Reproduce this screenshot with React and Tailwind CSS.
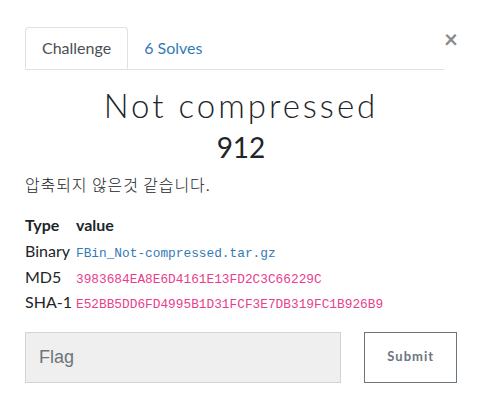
export default function App() {
  const mono = { fontFamily: "'Liberation Mono', monospace" };
  return (
    <div className="w-[482px] h-[411px] bg-white px-[25px] pt-[27px] text-[#212529]" style={{ fontFamily: "Lato, 'Noto Sans CJK KR', sans-serif" }}>
      <div className="flex items-start">
        <div className="flex flex-1 border-b border-[#dee2e6] text-[16px]">
          <div className="-mb-px h-[42px] px-[16px] flex items-center border border-[#dee2e6] border-b-white rounded-t-[4px] bg-white text-[#495057]">Challenge</div>
          <div className="h-[42px] px-[16px] flex items-center text-[#337ab7]">6 Solves</div>
        </div>
        <div className="w-[12px] ml-[1px] flex items-center justify-center text-[24px] leading-none font-bold text-[#8a8a8a]">×</div>
      </div>
      <div className="text-center mt-[16px] text-[33px] font-light leading-[38px] tracking-[3px]">Not compressed</div>
      <div className="text-center mt-[6px] text-[28px] leading-[34px]">912</div>
      <div className="mt-[8px] text-[16px] leading-[24px] tracking-[0.9px] font-light" style={{ fontFamily: "'Noto Sans CJK KR', Lato, sans-serif" }}>압축되지 않은것 같습니다.</div>
      <table className="mt-[16px] text-[16px] border-collapse">
        <thead>
          <tr>
            <th className="text-left font-bold pr-[4px] p-0 leading-[26px] align-baseline">Type</th>
            <th className="text-left font-bold p-0 leading-[26px] align-baseline">value</th>
          </tr>
        </thead>
        <tbody>
          <tr>
            <td className="pr-[4px] p-0 leading-[25.5px] align-baseline">Binary</td>
            <td className="p-0 text-[12.8px] leading-[16px] align-baseline text-[#337ab7]" style={mono}>FBin_Not-compressed.tar.gz</td>
          </tr>
          <tr>
            <td className="pr-[4px] p-0 leading-[25.5px] align-baseline">MD5</td>
            <td className="p-0 text-[12.8px] leading-[16px] align-baseline text-[#e83e8c]" style={mono}>3983684EA8E6D4161E13FD2C3C66229C</td>
          </tr>
          <tr>
            <td className="pr-[4px] p-0 leading-[25.5px] align-baseline">SHA-1</td>
            <td className="p-0 text-[12.8px] leading-[16px] align-baseline text-[#e83e8c]" style={mono}>E52BB5DD6FD4995B1D31FCF3E7DB319FC1B926B9</td>
          </tr>
        </tbody>
      </table>
      <div className="mt-[17px] flex gap-[23px]">
        <div className="w-[318px] h-[51px] bg-[#efefef] border border-[#ced4da] flex items-center px-[13px] text-[18px] text-[#6c757d]" style={{ fontFamily: "'Liberation Sans', Arial, sans-serif" }}>Flag</div>
        <div className="w-[93px] h-[51px] border border-[#6c757d] flex items-center justify-center text-[13px] font-bold tracking-[1px] text-[#6c757d]">Submit</div>
      </div>
    </div>
  );
}
